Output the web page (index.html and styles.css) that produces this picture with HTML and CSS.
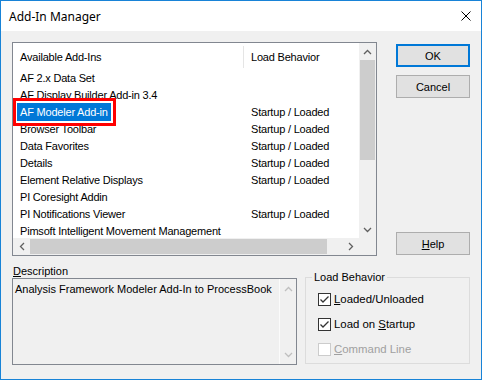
FILE: index.html
```html
<!DOCTYPE html>
<html>
<head>
<meta charset="utf-8">
<link rel="stylesheet" href="styles.css">
</head>
<body>
<div class="window">
  <div class="titlebar">
    <span class="title">Add-In Manager</span>
    <svg class="close" width="10" height="10" viewBox="0 0 10 10"><path d="M0.5 0.5 L9.5 9.5 M9.5 0.5 L0.5 9.5" stroke="#000" stroke-width="1" fill="none"/></svg>
  </div>
  <div class="content">
    <div class="top">
      <div class="listbox">
        <div class="list-view">
          <div class="header"><div class="col-name">Available Add-Ins</div><div class="col-load">Load Behavior</div></div>
          <div class="row"><div class="col-name">AF 2.x Data Set</div><div class="col-load"></div></div>
          <div class="row"><div class="col-name">AF Display Builder Add-in 3.4</div><div class="col-load"></div></div>
          <div class="row"><div class="col-name"><span class="selected">AF Modeler Add-in</span></div><div class="col-load">Startup / Loaded</div></div>
          <div class="row"><div class="col-name">Browser Toolbar</div><div class="col-load">Startup / Loaded</div></div>
          <div class="row"><div class="col-name">Data Favorites</div><div class="col-load">Startup / Loaded</div></div>
          <div class="row"><div class="col-name">Details</div><div class="col-load">Startup / Loaded</div></div>
          <div class="row"><div class="col-name">Element Relative Displays</div><div class="col-load">Startup / Loaded</div></div>
          <div class="row"><div class="col-name">PI Coresight Addin</div><div class="col-load"></div></div>
          <div class="row"><div class="col-name">PI Notifications Viewer</div><div class="col-load">Startup / Loaded</div></div>
          <div class="row"><div class="col-name">Pimsoft Intelligent Movement Management</div><div class="col-load"></div></div>
        </div>
        <div class="vscroll">
          <div class="sbtn"><svg width="9" height="6" viewBox="0 0 9 6"><path d="M1 5 L4.5 1.5 L8 5" stroke="#606060" stroke-width="1.3" fill="none"/></svg></div>
          <div class="vthumb"></div>
          <div class="sbtn vdown"><svg width="9" height="6" viewBox="0 0 9 6"><path d="M1 1 L4.5 4.5 L8 1" stroke="#606060" stroke-width="1.3" fill="none"/></svg></div>
        </div>
        <div class="hscroll">
          <div class="sbtn"><svg width="6" height="9" viewBox="0 0 6 9"><path d="M5 1 L1.5 4.5 L5 8" stroke="#606060" stroke-width="1.3" fill="none"/></svg></div>
          <div class="hthumb"></div>
          <div class="sbtn"><svg width="6" height="9" viewBox="0 0 6 9"><path d="M1 1 L4.5 4.5 L1 8" stroke="#606060" stroke-width="1.3" fill="none"/></svg></div>
        </div>
        <div class="corner"></div>
      </div>
      <div class="buttons">
        <div class="btn default">OK</div>
        <div class="btn">Cancel</div>
        <div class="btn help"><u>H</u>elp</div>
      </div>
    </div>
    <div class="bottom">
      <div class="desc">
        <div class="desc-label"><u>D</u>escription</div>
        <div class="desc-box">
          <div class="desc-text">Analysis Framework Modeler Add-In to ProcessBook</div>
          <div class="desc-scroll">
            <svg width="9" height="6" viewBox="0 0 9 6"><path d="M1 5 L4.5 1.5 L8 5" stroke="#bfbfbf" stroke-width="1.3" fill="none"/></svg>
            <svg width="9" height="6" viewBox="0 0 9 6"><path d="M1 1 L4.5 4.5 L8 1" stroke="#bfbfbf" stroke-width="1.3" fill="none"/></svg>
          </div>
        </div>
      </div>
      <fieldset class="group">
        <legend>Load Behavior</legend>
        <div class="checks">
          <div class="check"><span class="cbox"><svg width="11" height="11" viewBox="0 0 11 11"><path d="M1.5 5.5 L4 8 L9.5 2.5" stroke="#333" stroke-width="1.3" fill="none"/></svg></span><span class="clabel"><u>L</u>oaded/Unloaded</span></div>
          <div class="check"><span class="cbox"><svg width="11" height="11" viewBox="0 0 11 11"><path d="M1.5 5.5 L4 8 L9.5 2.5" stroke="#333" stroke-width="1.3" fill="none"/></svg></span><span class="clabel">Load on <u>S</u>tartup</span></div>
          <div class="check disabled"><span class="cbox"></span><span class="clabel"><u>C</u>ommand Line</span></div>
        </div>
      </fieldset>
    </div>
  </div>
</div>
</body>
</html>
```
FILE: styles.css
```css
* { box-sizing: border-box; }
html, body { margin: 0; padding: 0; background: #ffffff; }
body { font-family: "Liberation Sans", Arial, sans-serif; font-size: 11px; color: #000; }

.window {
  width: 482px;
  height: 380px;
  border: 1px solid #1883d7;
  background: #f0f0f0;
  display: flex;
  flex-direction: column;
}

.titlebar {
  height: 30px;
  background: #ffffff;
  display: flex;
  align-items: center;
  justify-content: space-between;
  padding: 0 10px 0 8px;
}
.title {
  font-family: "Noto Sans", "Liberation Sans", sans-serif;
  font-size: 12px;
  color: #000;
}
.close { display: block; }

.content {
  padding: 11px 11px 0 11px;
}

.top {
  display: flex;
  gap: 19px;
}

.listbox {
  width: 365px;
  height: 214px;
  border: 1px solid #828790;
  background: #ffffff;
  display: grid;
  grid-template-columns: 1fr 17px;
  grid-template-rows: 1fr 17px;
}

.list-view {
  overflow: hidden;
  letter-spacing: -0.2px;
}
.header, .row {
  display: flex;
  white-space: nowrap;
}
.header { height: 27px; align-items: center; padding-top: 1px; }
.row { height: 17px; line-height: 17px; }
.col-name {
  width: 231px;
  padding-left: 7px;
  border-right: 1px solid transparent;
}
.header .col-name {
  border-right-color: #e5e5e5;
  height: 22px;
  line-height: 22px;
}
.col-load { padding-left: 7px; }

.selected {
  position: relative;
  display: inline-block;
  background: #0078d7;
  color: #ffffff;
  margin-left: -3px;
  margin-top: -1px;
  padding: 0 3px;
  height: 18px;
  line-height: 19px;
  vertical-align: top;
}
.selected::after {
  content: "";
  position: absolute;
  top: -5px;
  left: -4px;
  right: -5px;
  bottom: -5px;
  border: 3px solid #ff0000;
}

.vscroll {
  background: #f0f0f0;
  display: flex;
  flex-direction: column;
}
.sbtn {
  width: 17px;
  height: 17px;
  flex: none;
  display: flex;
  align-items: center;
  justify-content: center;
}
.sbtn svg { display: block; }
.vthumb {
  height: 100px;
  margin: 0 1px;
  background: #cdcdcd;
}
.vdown { margin-top: auto; }

.hscroll {
  background: #f0f0f0;
  display: flex;
}
.hthumb {
  width: 297px;
  margin: 1px 0;
  background: #cdcdcd;
}
.hscroll .sbtn:last-child { margin-left: auto; }
.corner { background: #f0f0f0; }

.buttons {
  width: 74px;
  display: flex;
  flex-direction: column;
  gap: 8px;
  padding: 2px 0 1px;
}
.btn {
  height: 23px;
  border: 1px solid #adadad;
  background: #e1e1e1;
  display: flex;
  align-items: center;
  justify-content: center;
}
.btn.default {
  border-color: #0078d7;
  box-shadow: inset 0 0 0 1px #0078d7;
}
.btn.help { margin-top: auto; }

.bottom {
  display: flex;
  gap: 8px;
  margin-top: 8px;
}
.desc {
  width: 285px;
  display: flex;
  flex-direction: column;
}
.desc-label {
  height: 14px;
  line-height: 14px;
  padding-left: 1px;
}
.desc-box {
  height: 87px;
  border: 1px solid #828790;
  background: #f0f0f0;
  display: flex;
}
.desc-text {
  flex: 1;
  padding: 3px 2px;
  line-height: 14px;
}
.desc-scroll {
  width: 17px;
  border-left: 1px solid #fbfbfb;
  display: flex;
  flex-direction: column;
  justify-content: space-between;
  align-items: center;
  padding: 7px 0 6px;
}
.desc-scroll svg { display: block; }

.group {
  width: 165px;
  margin: 6px 0 1px 0;
  padding: 0;
  border: 1px solid #dcdcdc;
  min-width: 0;
}
.group legend {
  margin-left: 6px;
  padding: 0 2px;
  line-height: 14px;
  font-size: 11px;
}
.checks {
  display: flex;
  flex-direction: column;
  gap: 9px;
  padding: 7px 0 0 12px;
}
.check {
  height: 16px;
  display: flex;
  align-items: center;
  gap: 3px;
}
.cbox {
  width: 13px;
  height: 13px;
  border: 1px solid #333333;
  background: #ffffff;
  display: flex;
  align-items: center;
  justify-content: center;
}
.cbox svg { display: block; }
.clabel {
  font-size: 11.4px;
}
.check.disabled .cbox { border-color: #cccccc; }
.check.disabled .clabel { color: #a0a0a0; }
```
